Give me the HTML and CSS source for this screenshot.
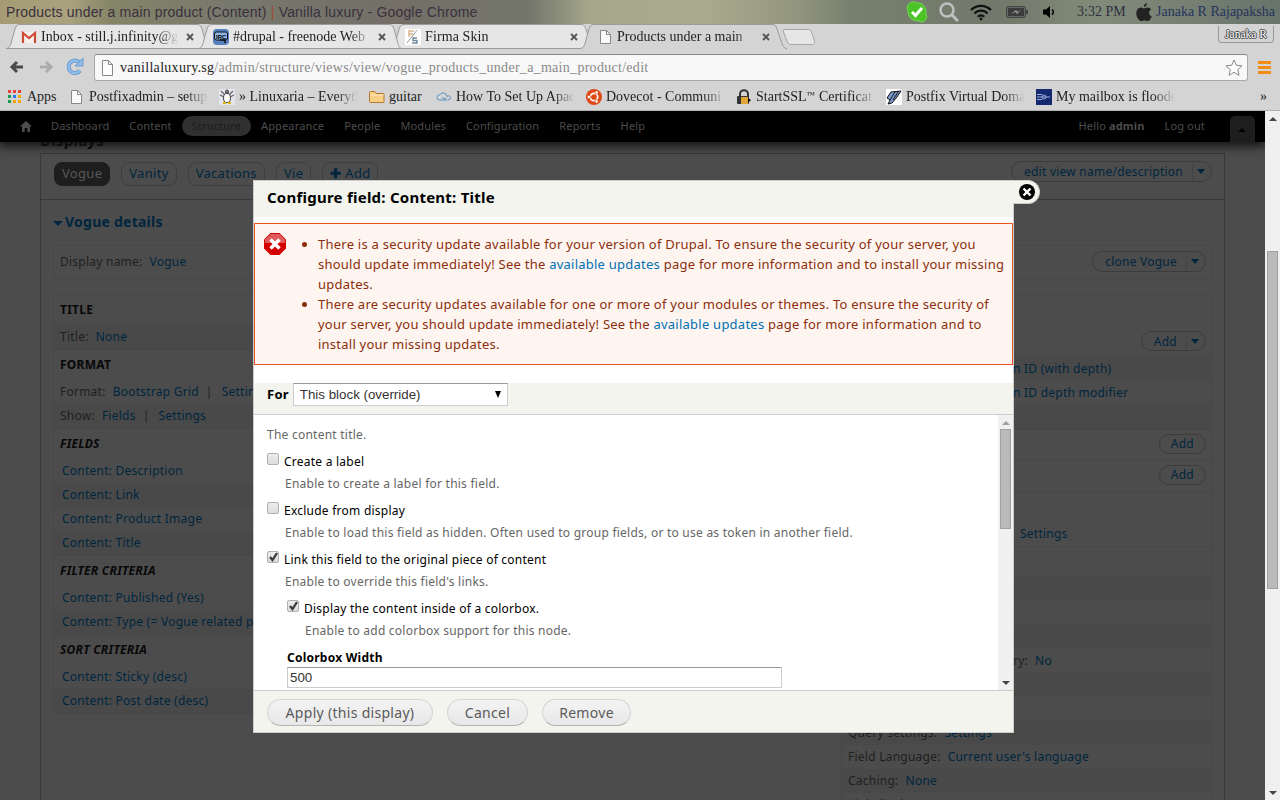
FILE: index.html
```
<!DOCTYPE html>
<html>
<head>
    <meta charset="utf-8">
    <title>Products under a main product (Content) | Vanilla luxury</title>
    <link rel="stylesheet" href="styles.css">
</head>
<body>
    <div class="desktop-bar">
        <span class="window-title">Products under a main product (Content) <i>|</i> Vanilla luxury - Google Chrome</span>
        <div class="tray">
            <svg class="skype" width="22" height="22" viewBox="0 0 22 22"><path d="M7 1a6 6 0 0 1 4 .8A9 9 0 0 1 20 12.500a5.500 5.500 0 0 1-8 7.300A9 9 0 0 1 2 10 6 6 0 0 1 7 1z" fill="#4cc425" stroke="#72d655"/><path d="M6 11l3.500 3.500L16 7" fill="none" stroke="#fff" stroke-width="3"/></svg>
            <svg class="search" width="20" height="20" viewBox="0 0 20 20" fill="none" stroke="#c0c0c0"><circle cx="8" cy="8" r="6.500" stroke-width="2.500"/><path d="M13 13l6 6" stroke-width="3"/></svg>
            <svg class="wifi" width="22" height="17" viewBox="0 0 22 17" fill="none" stroke="#111" stroke-width="2.200"><path d="M1 6a14 14 0 0 1 20 0M4.500 9.500a9 9 0 0 1 13 0M7.800 12.800a4.500 4.500 0 0 1 6.400 0"/><circle cx="11" cy="15" r="1.400" fill="#111" stroke="none"/></svg>
            <svg class="battery" width="22" height="12" viewBox="0 0 22 12"><rect x=".5" y=".5" width="19" height="11" rx="2" fill="#666" stroke="#444"/><rect x="2" y="2" width="16" height="8" fill="#3c3c3c"/><path d="M20 4h2v4h-2z" fill="#444"/><path d="M5 8l5-4 1.500 2L15 4l-4 4-1.500-2z" fill="#999"/></svg>
            <svg class="volume" width="12" height="12" viewBox="0 0 12 12"><path d="M0 3.500h3L7 0v12L3 8.500H0z" fill="#000"/><path d="M9 3.500a3 3 0 0 1 0 5" fill="none" stroke="#000" stroke-width="1.500"/></svg>
            <span class="clock">3:32 PM</span>
            <svg class="apple" width="16" height="19" viewBox="0 0 16 19"><path d="M11 0c.2 2-1.500 4-3.200 4C7.600 2.200 9.300.3 11 0zM8 5.500c1 0 2-1 3.500-1 1.600 0 2.900.8 3.600 1.900-3 1.800-2.600 5.700.6 6.900C15 15.500 13.500 18 12 18s-2-.8-3.500-.8S6.500 18 5 18C3 18 .3 14 .3 10.500.3 6.500 2.700 4.500 5 4.500c1.300 0 2.200 1 3 1z" fill="#222"/></svg>
            <span class="user">Janaka R Rajapaksha</span>
        </div>
    </div>

    <div class="tab-strip">
        <svg class="tab-shapes" width="1280" height="26" viewBox="0 0 1280 26">
            <path d="M6 24.500c3 0 4-2 5-5L15 5c1-3 2-4.500 5-4.500h177c3 0 4 1.500 5 4.500l4 14.500c1 3 1 5 5 5z" fill="#e6e6e6" stroke="#9b9b9b"/>
            <path d="M390 24.500c3 0 4-2 5-5L399 5c1-3 2-4.500 5-4.500h177c3 0 4 1.500 5 4.500l4 14.500c1 3 1 5 5 5z" fill="#e6e6e6" stroke="#9b9b9b"/>
            <path d="M198 24.500c3 0 4-2 5-5L207 5c1-3 2-4.500 5-4.500h177c3 0 4 1.500 5 4.500l4 14.500c1 3 1 5 5 5z" fill="#e6e6e6" stroke="#9b9b9b"/>
            <path d="M0 24.500h580c3 0 4-2 5-5L589 5c1-3 2-4.500 5-4.500h178c3 0 4 1.500 5 4.500l5 14.500c1 3 2 5 5 5h493V27H0z" fill="#d4d4d4"/>
            <path d="M6 24.500h574c3 0 4-2 5-5L589 5c1-3 2-4.500 5-4.500h178c3 0 4 1.500 5 4.500l5 14.500c1 3 2 5 5 5" fill="none" stroke="#9b9b9b"/>
            <path d="M785 5.500h23c2 0 3 1 3.500 2.500l3 9c.5 2-.5 3.500-2.500 3.500h-21c-2 0-3-1-3.500-2.500l-4-10c-.5-1.500 0-2.500 1.500-2.500z" fill="#e6e6e6" stroke="#a6a6a6"/>
        </svg>
        <div class="tab">
            <svg width="16" height="16" viewBox="0 0 16 16"><path d="M1 3h14v11H1z" fill="#f4f0ee"/><path d="M2 14V4l6 5 6-5v10" fill="none" stroke="#d14836" stroke-width="2.200"/></svg>
            <span class="tab-title">Inbox - still.j.infinity@g</span>
            <svg class="tab-close" width="8" height="8" viewBox="0 0 8 8"><path d="M1 1l6 6M7 1L1 7" stroke="#555" stroke-width="1.800"/></svg>
        </div>
        <div class="tab">
            <svg width="16" height="16" viewBox="0 0 16 16"><rect width="16" height="16" rx="4" fill="#5580bd"/><rect x="1.500" y="3" width="13" height="8" rx="2" fill="#8fb4e6" stroke="#111"/><text x="3" y="9.500" class="irc">IRC</text><path d="M7 11h5v3" stroke="#111" stroke-width="1.500" fill="none"/></svg>
            <span class="tab-title">#drupal - freenode Web</span>
            <svg class="tab-close" width="8" height="8" viewBox="0 0 8 8"><path d="M1 1l6 6M7 1L1 7" stroke="#555" stroke-width="1.800"/></svg>
        </div>
        <div class="tab">
            <svg width="16" height="16" viewBox="0 0 16 16"><rect width="16" height="16" fill="#fff"/><path d="M4 8V2h5M4 5h4" fill="none" stroke="#d8b58c" stroke-width="1.500"/><path d="M2 14L12 1" stroke="#999"/><path d="M12 9H8v2.500h4V14H7" fill="none" stroke="#71899e" stroke-width="1.500"/></svg>
            <span class="tab-title whole">Firma Skin</span>
            <svg class="tab-close" width="8" height="8" viewBox="0 0 8 8"><path d="M1 1l6 6M7 1L1 7" stroke="#555" stroke-width="1.800"/></svg>
        </div>
        <div class="tab">
            <svg width="16" height="16" viewBox="0 0 16 16"><path d="M3.500 1.500h6l4 4v9h-10z" fill="#fafafa" stroke="#888"/><path d="M9.500 1.500v4h4" fill="none" stroke="#888"/></svg>
            <span class="tab-title">Products under a main</span>
            <svg class="tab-close" width="8" height="8" viewBox="0 0 8 8"><path d="M1 1l6 6M7 1L1 7" stroke="#555" stroke-width="1.800"/></svg>
        </div>
        <div class="profile">Janaka R</div>
    </div>

    <div class="nav-bar">
        <svg width="16" height="16" viewBox="0 0 16 16"><path d="M14 8H4M8 3L3 8l5 5" fill="none" stroke="#4b4b4b" stroke-width="3"/></svg>
        <svg class="forward" width="16" height="16" viewBox="0 0 16 16"><path d="M2 8h10M8 3l5 5-5 5" fill="none" stroke="#acacac" stroke-width="3"/></svg>
        <svg class="reload" width="20" height="20" viewBox="0 0 20 20"><path d="M15 13.500A6.300 6.300 0 1 1 14 5" fill="none" stroke="#5b93cc" stroke-width="4"/><path d="M15 13.500A6.300 6.300 0 1 1 14 5" fill="none" stroke="#8fbce8" stroke-width="2.500"/><path d="M18 1v8h-8z" fill="#8fbce8" stroke="#5b93cc" stroke-width=".8"/></svg>
        <div class="omnibox">
            <svg width="16" height="16" viewBox="0 0 16 16"><path d="M2.500.5h6l4 4v11h-10z" fill="#fff" stroke="#888"/><path d="M8.500.5v4h4" fill="none" stroke="#888"/></svg>
            <span class="url"><b>vanillaluxury.sg</b>/admin/structure/views/view/vogue_products_under_a_main_product/edit</span>
            <svg class="star" width="18" height="18" viewBox="0 0 18 18"><path d="M9 1l2.300 5.300 5.700.5-4.300 3.800L14 16.300 9 13.300l-5 3 1.300-5.700L1 6.800l5.700-.5z" fill="#fff" stroke="#888" stroke-linejoin="round"/></svg>
        </div>
        <div class="menu-icon"><i></i><i></i><i></i></div>
    </div>

    <div class="bookmarks">
        <div class="bookmark apps">
            <svg width="16" height="16" viewBox="0 0 16 16"><path d="M1 1h3v3H1zM6 1h3v3H6zM11 1h3v3h-3z" fill="#ea4335"/><path d="M1 6h3v3H1z" fill="#1a9a50"/><path d="M6 6h3v3H6z" fill="#2b7de9"/><path d="M11 6h3v3h-3zM6 11h3v3H6zM11 11h3v3h-3z" fill="#f5a400"/><path d="M1 11h3v3H1z" fill="#1a9a50"/></svg>
            <span>Apps</span>
        </div>
        <div class="bookmark">
            <svg width="16" height="16" viewBox="0 0 16 16"><path d="M2.500 1.500h6l4 4v9h-10z" fill="#fafafa" stroke="#888"/><path d="M8.500 1.500v4h4" fill="none" stroke="#888"/></svg>
            <span class="fade">Postfixadmin – setup</span>
        </div>
        <div class="bookmark">
            <svg width="16" height="16" viewBox="0 0 16 16"><rect width="16" height="16" fill="#e4e5ef"/><path d="M2 2l4 4M14 2l-4 4M1 6l4 2M15 6l-4 2" stroke="#666" stroke-width="1.300"/><ellipse cx="8" cy="9" rx="3.500" ry="4.500" fill="#fff" stroke="#444"/><path d="M6.500 4V2.500a1.500 1.500 0 0 1 3 0V4z" fill="#888" stroke="#444"/><path d="M4 14h3M9 14h3" stroke="#d8b400" stroke-width="2"/></svg>
            <span class="fade">» Linuxaria – Everyth</span>
        </div>
        <div class="bookmark folder">
            <svg width="16" height="16" viewBox="0 0 16 16"><path d="M.5 3.500q0-1 1-1h4l1.500 2h7q1 0 1 1v7q0 1-1 1h-12.500q-1 0-1-1z" fill="#f7cf85" stroke="#b5762a"/><path d="M1.500 6h13" stroke="#fdeac4"/></svg>
            <span>guitar</span>
        </div>
        <div class="bookmark">
            <svg width="16" height="16" viewBox="0 0 16 16"><path d="M11 11H3.500a2.500 2.500 0 0 1 0-5 4 4 0 0 1 7.500 1.500 2 2 0 0 1 3.500 1.500q0 2-3 2M6 8.500q2 1.500 4 1" fill="none" stroke="#5b93c4"/></svg>
            <span class="fade">How To Set Up Apac</span>
        </div>
        <div class="bookmark">
            <svg width="16" height="16" viewBox="0 0 16 16"><circle cx="8" cy="8" r="8" fill="#dd4814"/><circle cx="8" cy="8" r="3.700" fill="none" stroke="#fff" stroke-width="1.700"/><g fill="#fff" stroke="#dd4814" stroke-width=".7"><circle cx="2.900" cy="8" r="1.700"/><circle cx="10.600" cy="3.500" r="1.700"/><circle cx="10.600" cy="12.500" r="1.700"/></g></svg>
            <span class="fade">Dovecot - Communi</span>
        </div>
        <div class="bookmark">
            <svg width="16" height="16" viewBox="0 0 16 16"><path d="M4 8V5a4 3.800 0 0 1 8 0v3" fill="none" stroke="#333" stroke-width="2"/><rect x="1" y="7" width="12" height="8" rx="1" fill="#333"/><rect x="5" y="8" width="7" height="7" fill="#e2a63a"/><path d="M12 9l3 2-3 3z" fill="#111"/></svg>
            <span class="fade">StartSSL<small>™</small> Certificat</span>
        </div>
        <div class="bookmark">
            <svg width="16" height="16" viewBox="0 0 16 16"><rect width="16" height="16" fill="#fff"/><path d="M1 9l4-6 10-1-4 6-5 6-4 1 2-4z" fill="#7c9ad0" stroke="#111"/><path d="M4 11l5-8M7 11l5-8" stroke="#111"/></svg>
            <span class="fade">Postfix Virtual Doma</span>
        </div>
        <div class="bookmark">
            <svg width="16" height="16" viewBox="0 0 16 16"><rect width="16" height="16" fill="#14296f"/><path d="M1 5.500h5M1 8h13M1 10.500h5" stroke="#9fb0d8"/><circle cx="8" cy="8" r="2" fill="none" stroke="#9fb0d8"/></svg>
            <span class="fade">My mailbox is floode</span>
        </div>
        <span class="more">»</span>
    </div>

    <div class="viewport">
        <div class="page">
            <div class="toolbar">
                <svg width="12" height="11" viewBox="0 0 12 11"><path d="M6 0l6 5.500h-2V11H7.300V7H4.700v4H2V5.500H0z" fill="#4c4c4c"/></svg>
                <a>Dashboard</a>
                <a>Content</a>
                <a class="active">Structure</a>
                <a>Appearance</a>
                <a>People</a>
                <a>Modules</a>
                <a>Configuration</a>
                <a>Reports</a>
                <a>Help</a>
                <span class="hello">Hello <b>admin</b></span>
                <a>Log out</a>
                <span class="toggle"><i class="arrow-up"></i></span>
            </div>

            <div class="content">
                <h1>Displays</h1>
                <div class="views">
                    <div class="displays">
                        <a class="display current">Vogue</a>
                        <a class="display">Vanity</a>
                        <a class="display">Vacations</a>
                        <a class="display">Vie</a>
                        <a class="display"><b>✚</b> Add</a>
                        <span class="drop"><span>edit view name/description</span><i class="arrow-down"></i></span>
                    </div>
                    <h2><i class="arrow-down"></i>Vogue details</h2>
                    <div class="display-name">
                        <span>Display name:</span><a>Vogue</a>
                        <span class="drop"><span>clone Vogue</span><i class="arrow-down"></i></span>
                    </div>
                    <div class="columns">
                        <div class="column first">
                            <section>
                                <h3>Title</h3>
                                <p><span>Title:</span><a>None</a></p>
                            </section>
                            <section>
                                <h3>Format</h3>
                                <p class="light"><span>Format:</span><a>Bootstrap Grid</a><u>|</u><a>Settings</a></p>
                                <p><span>Show:</span><a>Fields</a><u>|</u><a>Settings</a></p>
                            </section>
                            <section>
                                <h3><em>Fields</em></h3>
                                <p class="light item"><a>Content: Description</a></p>
                                <p class="item"><a>Content: Link</a></p>
                                <p class="light item"><a>Content: Product Image</a></p>
                                <p class="item"><a>Content: Title</a></p>
                            </section>
                            <section>
                                <h3><em>Filter criteria</em></h3>
                                <p class="light item"><a>Content: Published (Yes)</a></p>
                                <p class="item"><a>Content: Type (= Vogue related product)</a></p>
                            </section>
                            <section>
                                <h3><em>Sort criteria</em></h3>
                                <p class="light item"><a>Content: Sticky (desc)</a></p>
                                <p class="item"><a>Content: Post date (desc)</a></p>
                            </section>
                        </div>
                        <div class="column third">
                            <section>
                                <h3></h3>
                                <h3 class="tall"><span class="drop"><span>Add</span><i class="arrow-down"></i></span></h3>
                                <p class="partial"><a>n ID (with depth)</a></p>
                                <p class="partial light"><a>n ID depth modifier</a></p>
                                <p></p>
                            </section>
                            <section><h3><span class="drop single">Add</span></h3></section>
                            <section><h3><span class="drop single">Add</span></h3></section>
                            <section>
                                <h3></h3>
                                <p class="light settings"><a>Settings</a></p>
                            </section>
                            <section>
                                <h3></h3>
                                <p></p>
                                <p class="light"></p>
                                <p></p>
                                <p class="light partial"><span>ry:</span><a>No</a></p>
                                <p></p>
                                <p class="light"></p>
                                <p><span>Query settings:</span><a>Settings</a></p>
                                <p class="light"><span>Field Language:</span><a>Current user's language</a></p>
                                <p><span>Caching:</span><a>None</a></p>
                                <p class="light"><span>Link display:</span></p>
                            </section>
                        </div>
                    </div>
                </div>
            </div>
        </div>
        <div class="scrollbar">
            <i class="arrow-up"></i>
            <div class="thumb"></div>
            <i class="arrow-down"></i>
        </div>

        <div class="modal">
            <div class="modal-title">Configure field: Content: Title</div>
            <div class="modal-close"><svg width="16" height="16" viewBox="0 0 16 16"><circle cx="8" cy="8" r="8" fill="#000"/><path d="M4.500 4.500l7 7M11.500 4.500l-7 7" stroke="#fff" stroke-width="2.400"/></svg></div>
            <div class="messages">
                <svg width="22" height="22" viewBox="0 0 22 22"><path d="M6.500 0h9L22 6.500v9L15.500 22h-9L0 15.500v-9z" fill="#d40000"/><path d="M6.500 1h9l5.500 5.500V10H1V6.500z" fill="#df5a5a"/><path d="M6.500 6.500l9 9M15.500 6.500l-9 9" stroke="#fff" stroke-width="3.500"/></svg>
                <ul>
                    <li>There is a security update available for your version of Drupal. To ensure the security of your server, you<br>should update immediately! See the <a>available updates</a> page for more information and to install your missing<br>updates.</li>
                    <li>There are security updates available for one or more of your modules or themes. To ensure the security of<br>your server, you should update immediately! See the <a>available updates</a> page for more information and to<br>install your missing updates.</li>
                </ul>
            </div>
            <div class="override">
                <label>For</label>
                <div class="select"><span>This block (override)</span><i class="arrow-down"></i></div>
            </div>
            <div class="modal-body">
                <div class="form">
                    <p class="intro">The content title.</p>
                    <div class="check"><i class="box"></i><label>Create a label</label></div>
                    <p class="description">Enable to create a label for this field.</p>
                    <div class="check"><i class="box"></i><label>Exclude from display</label></div>
                    <p class="description">Enable to load this field as hidden. Often used to group fields, or to use as token in another field.</p>
                    <div class="check"><i class="box"><svg width="12" height="12" viewBox="0 0 12 12"><path d="M2 5l2.500 3L9 1" fill="none" stroke="#3c3c3c" stroke-width="2.300"/></svg></i><label>Link this field to the original piece of content</label></div>
                    <p class="description">Enable to override this field's links.</p>
                    <div class="nested">
                        <div class="check"><i class="box"><svg width="12" height="12" viewBox="0 0 12 12"><path d="M2 5l2.500 3L9 1" fill="none" stroke="#3c3c3c" stroke-width="2.300"/></svg></i><label>Display the content inside of a colorbox.</label></div>
                        <p class="description">Enable to add colorbox support for this node.</p>
                        <label class="field-label">Colorbox Width</label>
                        <div class="text-field">500</div>
                    </div>
                </div>
                <div class="scrollbar inner">
                    <i class="arrow-up"></i>
                    <div class="thumb"></div>
                    <i class="arrow-down"></i>
                </div>
            </div>
            <div class="buttons">
                <span class="button apply">Apply (this display)</span>
                <span class="button cancel">Cancel</span>
                <span class="button remove">Remove</span>
            </div>
        </div>
    </div>
</body>
</html>
```

FILE: styles.css
```
* {
    box-sizing: border-box;
}
body {
    margin: 0;
    width: 1280px;
    height: 800px;
    overflow: hidden;
    display: flex;
    flex-direction: column;
    font-family: "Noto Sans", sans-serif;
    font-size: 12px;
    white-space: nowrap;
    background: #d4d4d4;
}
h1, h2, h3, p, ul {
    margin: 0;
    padding: 0;
}
svg {
    flex: none;
    display: block;
}

/* desktop panel */
.desktop-bar {
    height: 24px;
    flex: none;
    display: flex;
    align-items: center;
    justify-content: space-between;
    padding: 0 5px 0 6px;
    background: linear-gradient(90deg, #a59c75 0, #aaa27e 70px, #858568 110px, #77786c 230px, #736f67 400px, #74766b 530px, #a5a88b 590px, #a9ac8e 700px, #92957d 800px, #76806f 850px, #72786a 1000px, #828b7a 1100px, #68736a 1280px);
}
.window-title {
    font: 14px/24px "Liberation Sans", sans-serif;
    color: #3a3040;
    letter-spacing: 0.18px;
}
.window-title i {
    color: #a04a30;
    font-style: normal;
}
.tray {
    display: flex;
    align-items: center;
    font: 14px/24px "Liberation Serif", serif;
    color: #2d3040;
}
.search { margin-left: 11px; }
.wifi { margin-left: 11px; }
.battery { margin-left: 14px; }
.volume { margin-left: 15px; }
.clock { margin-left: 22px; width: 59px; }
.user {
    margin-left: 4px;
    color: #26335c;
}

/* browser chrome */
.tab-strip {
    position: relative;
    height: 25px;
    flex: none;
    display: flex;
    padding-left: 14px;
    background: #d4d4d4;
    font: 14px/25px "Liberation Serif", serif;
    color: #222;
}
.tab-shapes {
    position: absolute;
    left: 0;
    top: 0;
}
.tab {
    position: relative;
    width: 192px;
    padding-left: 7px;
    display: flex;
    align-items: center;
}
.tab-title {
    width: 138px;
    margin-left: 4px;
    -webkit-mask-image: linear-gradient(90deg, #000 85%, transparent);
    mask-image: linear-gradient(90deg, #000 85%, transparent);
}
.tab-title.whole {
    letter-spacing: 0.1px;
}
.tab-close {
    margin: 1px 0 0 7px;
}
.irc {
    font: bold 6px "Liberation Sans", sans-serif;
}
.profile {
    margin: 2px 6px 0 auto;
    width: 56px;
    height: 17px;
    border: 1px solid #999;
    border-top: 0;
    border-radius: 0 0 4px 4px;
    font-size: 11.5px;
    line-height: 17px;
    text-align: center;
    color: #fff;
    text-shadow: 1px 0 #444, -1px 0 #444, 0 1px #444, 0 -1px #444;
}
.nav-bar {
    height: 36px;
    flex: none;
    display: flex;
    align-items: center;
    padding: 0 9px 0 9px;
}
.forward { margin-left: 13px; }
.reload { margin-left: 11px; }
.omnibox {
    flex: 1;
    height: 27px;
    margin: 1px 10px 0 9px;
    padding: 0 4px 0 5px;
    display: flex;
    align-items: center;
    background: #f8f8f8;
    border: 1px solid #a8a8a8;
    border-top-color: #888;
    border-radius: 3px;
    font: 14px "Liberation Serif", serif;
    color: #888;
}
.url {
    flex: 1;
    margin-left: 4px;
    letter-spacing: 0.29px;
}
.url b {
    font-weight: normal;
    color: #222;
}
.menu-icon i {
    display: block;
    width: 13px;
    height: 3px;
    margin: 2px 0;
    background: #f28c14;
}
.bookmarks {
    height: 26px;
    flex: none;
    display: flex;
    align-items: center;
    padding: 0 13px 1px 7px;
    border-bottom: 1px solid #b0b0b0;
    font: 14px/22px "Liberation Serif", serif;
    color: #222;
}
.bookmark {
    display: flex;
    align-items: center;
    gap: 4px;
    width: 150px;
    flex: none;
}
.bookmark.apps { width: 62px; }
.bookmark.folder { width: 67px; }
.bookmark small {
    font-size: 9px;
    vertical-align: 3px;
    line-height: 1;
}
.fade {
    width: 119px;
    -webkit-mask-image: linear-gradient(90deg, #000 82%, transparent);
    mask-image: linear-gradient(90deg, #000 82%, transparent);
}
.more {
    margin-left: auto;
}

/* page */
.viewport {
    position: relative;
    flex: 1;
    min-height: 0;
    display: flex;
    letter-spacing: 0.24px;
}
.page {
    width: 1265px;
    overflow: hidden;
    background: #4c4c4c;
    color: #1f1f1f;
}
.page a {
    color: #00263f;
}
.toolbar {
    position: relative;
    height: 31px;
    display: flex;
    align-items: center;
    padding: 0 10px 0 20px;
    background: #000;
    box-shadow: 0 2px 10px 2px #111;
    font-size: 11px;
    letter-spacing: 0.15px;
}
.toolbar a, .toolbar span {
    color: #4c4c4c;
    padding: 0 10px;
    line-height: 20px;
    margin-bottom: 2px;
}
.toolbar svg {
    margin-right: 9px;
}
.toolbar .active {
    color: #1c1c1c;
    background: #303030;
    border-radius: 10px;
}
.toolbar .hello {
    margin-left: auto;
}
.toolbar .toggle {
    width: 25px;
    height: 26px;
    padding: 12px 8px;
    margin: 5px 0 0 15px;
    background: #1e1e1e;
    border-radius: 5px 5px 0 0;
}
.arrow-up, .arrow-down {
    display: inline-block;
    width: 0;
    height: 0;
    border: 4px solid transparent;
}
.arrow-up {
    border-top: 0;
    border-bottom-color: #000;
}
.arrow-down {
    border-bottom: 0;
    border-top: 5px solid #00263f;
}
.toolbar .arrow-up {
    display: block;
}
.content {
    padding: 0 40px;
}
h1 {
    margin-top: -12px;
    height: 23px;
    font-size: 15px;
    line-height: 20px;
    color: #080808;
}
.views {
    height: 700px;
    border: 1px solid #383838;
}
.displays {
    height: 46px;
    display: flex;
    padding: 8px 12px 8px 13px;
    border-bottom: 1px solid #383838;
    font-size: 13px;
    letter-spacing: 0.3px;
}
.display {
    height: 24px;
    margin-right: 11px;
    padding: 0 7px;
    border: 1px solid #3e3e3e;
    border-radius: 8px;
    line-height: 21px;
}
.page .display.current {
    background: #1e1e1e;
    border-color: #1e1e1e;
    color: #575757;
}
.drop {
    margin-left: auto;
    height: 21px;
    display: flex;
    align-items: center;
    padding: 0 6px 0 12px;
    border: 1px solid #3c3c3c;
    border-radius: 11px;
    font-size: 12px;
    font-weight: normal;
    text-transform: none;
    letter-spacing: 0.24px;
    line-height: 18px;
    color: #00263f;
}
.displays .drop {
    margin-top: -1px;
}
.drop span {
    padding-right: 9px;
    margin-right: 4px;
    border-right: 1px solid #424242;
    line-height: 15px;
}
h2 {
    margin: 12px 0 0 12px;
    font-size: 14px;
    line-height: 20px;
    color: #00263f;
}
h2 .arrow-down {
    margin-right: 2px;
    border-width: 5px 5px 0;
    vertical-align: 1px;
}
.display-name {
    height: 34px;
    margin: 13px 12px 15px;
    padding: 0 5px 2px 6px;
    display: flex;
    align-items: center;
    border: 1px solid #474747;
}
.display-name a, .column p span + a {
    margin-left: 7px;
}
.columns {
    margin: 0 12px;
    display: flex;
    align-items: flex-start;
    justify-content: space-between;
}
.column {
    border: 1px solid #474747;
}
.first { width: 390px; }
.third { width: 371px; }
section + section {
    border-top: 1px solid #464646;
}
h3 {
    height: 30px;
    padding: 0 5px 0 6px;
    display: flex;
    align-items: center;
    font-size: 12px;
    line-height: 28px;
    text-transform: uppercase;
    color: #080808;
}
h3.tall { height: 32px; }
.column p {
    height: 24px;
    padding-left: 6px;
    line-height: 24px;
    background: #494949;
}
.column p.light { background: none; }
.column p.item { padding-left: 8px; }
.column p.partial { padding-left: 171px; }
.column p.settings { padding-left: 178px; }
.column u {
    margin: 0 9px 0 7px;
    text-decoration: none;
}
h3 .drop { height: 20px; }
h3 .drop.single {
    padding: 0 11px;
    margin-bottom: 2px;
}

.scrollbar {
    width: 15px;
    display: flex;
    flex-direction: column;
    align-items: center;
    background: #f0f0f0;
    padding: 6px 0 5px;
}
.scrollbar i {
    border-top-color: #444;
    border-bottom-color: #444;
}
.scrollbar .arrow-up { border-width: 0 4px 4px; }
.scrollbar .arrow-down { border-width: 4px 4px 0; margin-top: auto; }
.thumb {
    width: 11px;
    height: 338px;
    margin-top: 130px;
    background: #bababa;
    border: 1px solid #a0a0a0;
}

/* dialog */
.modal {
    position: absolute;
    left: 253px;
    top: 69px;
    width: 761px;
    height: 553px;
    border: 1px solid #ccc;
    background: #fff;
    display: flex;
    flex-direction: column;
}
.modal-title {
    height: 36px;
    flex: none;
    padding-left: 13px;
    background: #f3f4ee;
    font-size: 15px;
    font-weight: bold;
    line-height: 33px;
    color: #000;
}
.modal-close {
    position: absolute;
    left: 759px;
    top: -1px;
    width: 27px;
    height: 24px;
    padding: 3px 0 0 6px;
    background: #f3f4ee;
    border: 1px solid #ccc;
    border-left: 0;
    border-radius: 0 12px 12px 0;
}
.messages {
    height: 142px;
    flex: none;
    margin: 6px 0 18px;
    padding: 9px;
    display: flex;
    background: #fef5f1;
    border: 1px solid #ed541d;
    font-size: 13px;
    line-height: 20px;
    color: #8c2e0b;
}
.messages ul {
    padding-left: 32px;
    margin-top: 1px;
}
.messages a {
    color: #0071b3;
}
.override {
    height: 32px;
    flex: none;
    padding: 0 13px 8px;
    display: flex;
    background: #f3f4ee;
    border-bottom: 1px solid #ccc;
    font-size: 13px;
    font-weight: bold;
    line-height: 22px;
}
.select {
    width: 215px;
    height: 23px;
    margin-left: 4px;
    padding: 0 6px;
    display: flex;
    align-items: center;
    justify-content: space-between;
    background: #fff;
    border: 1px solid #ccc;
    border-top-color: #999;
    font: 13.333px "Liberation Sans", sans-serif;
    letter-spacing: 0;
    color: #333;
}
.select i {
    border-width: 7px 3.5px 0;
    border-top-color: #000;
}
.modal-body {
    flex: 1;
    min-height: 0;
    display: flex;
    justify-content: space-between;
    overflow: hidden;
}
.form {
    width: 700px;
    padding: 9px 0 0 13px;
    color: #000;
}
.intro {
    height: 20px;
    line-height: 22px;
    color: #666;
}
.check {
    display: flex;
    height: 27px;
    padding-top: 9px;
}
.check label {
    margin-left: 5px;
    line-height: 18px;
}
.box {
    width: 12px;
    height: 12px;
    background: linear-gradient(#ececec, #dcdcdc);
    border: 1px solid #b0b0b0;
    border-radius: 2px;
}
.description {
    height: 22px;
    padding-left: 18px;
    line-height: 25px;
    color: #666;
}
.nested {
    padding-left: 20px;
}
.field-label {
    display: block;
    margin-top: 8px;
    font-weight: bold;
    line-height: 19px;
}
.text-field {
    width: 495px;
    height: 21px;
    padding-left: 2px;
    border: 1px solid #ccc;
    border-top-color: #999;
    font: 13.333px/19px "Liberation Sans", sans-serif;
    letter-spacing: 0;
    color: #333;
}
.inner .arrow-up { border-bottom-color: #a0a0a0; }
.inner .thumb {
    height: 100px;
    margin-top: 4px;
}
.buttons {
    height: 42px;
    flex: none;
    padding: 8px 13px;
    display: flex;
    gap: 14px;
    background: #f3f4ee;
    border-top: 1px solid #ccc;
}
.button {
    height: 27px;
    border: 1px solid #d4d4d4;
    border-bottom-color: #b4b4b4;
    border-radius: 14px;
    background: linear-gradient(#f3f3f3, #e8e8e8);
    font-size: 14px;
    letter-spacing: 0.3px;
    line-height: 25px;
    text-align: center;
    color: #5a5a5a;
}
.apply { width: 166px; }
.cancel { width: 81px; }
.remove { width: 89px; }
```
